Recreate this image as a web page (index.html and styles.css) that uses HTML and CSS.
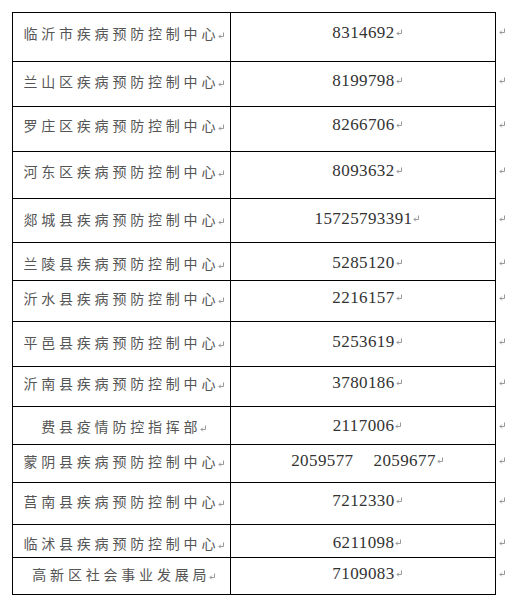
FILE: index.html
```html
<!DOCTYPE html>
<html lang="zh">
<head>
<meta charset="utf-8">
<title>疾病预防控制中心联系电话</title>
<link rel="stylesheet" href="styles.css">
</head>
<body>
<div class="page">
  <div class="tbl">
    <div class="row"><div class="cell name">临沂市疾病预防控制中心<svg class="pm" viewBox="0 0 6 7" width="6" height="7"><path d="M5.5 0.5V4.5H1M2.8 2.7L1 4.5L2.8 6.3"/></svg></div><div class="cell num">8314692<svg class="pm" viewBox="0 0 6 7" width="6" height="7"><path d="M5.5 0.5V4.5H1M2.8 2.7L1 4.5L2.8 6.3"/></svg></div><div class="end"><svg class="pm" viewBox="0 0 6 7" width="6" height="7"><path d="M5.5 0.5V4.5H1M2.8 2.7L1 4.5L2.8 6.3"/></svg></div></div>
    <div class="row"><div class="cell name">兰山区疾病预防控制中心<svg class="pm" viewBox="0 0 6 7" width="6" height="7"><path d="M5.5 0.5V4.5H1M2.8 2.7L1 4.5L2.8 6.3"/></svg></div><div class="cell num">8199798<svg class="pm" viewBox="0 0 6 7" width="6" height="7"><path d="M5.5 0.5V4.5H1M2.8 2.7L1 4.5L2.8 6.3"/></svg></div><div class="end"><svg class="pm" viewBox="0 0 6 7" width="6" height="7"><path d="M5.5 0.5V4.5H1M2.8 2.7L1 4.5L2.8 6.3"/></svg></div></div>
    <div class="row"><div class="cell name">罗庄区疾病预防控制中心<svg class="pm" viewBox="0 0 6 7" width="6" height="7"><path d="M5.5 0.5V4.5H1M2.8 2.7L1 4.5L2.8 6.3"/></svg></div><div class="cell num">8266706<svg class="pm" viewBox="0 0 6 7" width="6" height="7"><path d="M5.5 0.5V4.5H1M2.8 2.7L1 4.5L2.8 6.3"/></svg></div><div class="end"><svg class="pm" viewBox="0 0 6 7" width="6" height="7"><path d="M5.5 0.5V4.5H1M2.8 2.7L1 4.5L2.8 6.3"/></svg></div></div>
    <div class="row"><div class="cell name">河东区疾病预防控制中心<svg class="pm" viewBox="0 0 6 7" width="6" height="7"><path d="M5.5 0.5V4.5H1M2.8 2.7L1 4.5L2.8 6.3"/></svg></div><div class="cell num">8093632<svg class="pm" viewBox="0 0 6 7" width="6" height="7"><path d="M5.5 0.5V4.5H1M2.8 2.7L1 4.5L2.8 6.3"/></svg></div><div class="end"><svg class="pm" viewBox="0 0 6 7" width="6" height="7"><path d="M5.5 0.5V4.5H1M2.8 2.7L1 4.5L2.8 6.3"/></svg></div></div>
    <div class="row"><div class="cell name">郯城县疾病预防控制中心<svg class="pm" viewBox="0 0 6 7" width="6" height="7"><path d="M5.5 0.5V4.5H1M2.8 2.7L1 4.5L2.8 6.3"/></svg></div><div class="cell num">15725793391<svg class="pm" viewBox="0 0 6 7" width="6" height="7"><path d="M5.5 0.5V4.5H1M2.8 2.7L1 4.5L2.8 6.3"/></svg></div><div class="end"><svg class="pm" viewBox="0 0 6 7" width="6" height="7"><path d="M5.5 0.5V4.5H1M2.8 2.7L1 4.5L2.8 6.3"/></svg></div></div>
    <div class="row"><div class="cell name">兰陵县疾病预防控制中心<svg class="pm" viewBox="0 0 6 7" width="6" height="7"><path d="M5.5 0.5V4.5H1M2.8 2.7L1 4.5L2.8 6.3"/></svg></div><div class="cell num">5285120<svg class="pm" viewBox="0 0 6 7" width="6" height="7"><path d="M5.5 0.5V4.5H1M2.8 2.7L1 4.5L2.8 6.3"/></svg></div><div class="end"><svg class="pm" viewBox="0 0 6 7" width="6" height="7"><path d="M5.5 0.5V4.5H1M2.8 2.7L1 4.5L2.8 6.3"/></svg></div></div>
    <div class="row"><div class="cell name">沂水县疾病预防控制中心<svg class="pm" viewBox="0 0 6 7" width="6" height="7"><path d="M5.5 0.5V4.5H1M2.8 2.7L1 4.5L2.8 6.3"/></svg></div><div class="cell num">2216157<svg class="pm" viewBox="0 0 6 7" width="6" height="7"><path d="M5.5 0.5V4.5H1M2.8 2.7L1 4.5L2.8 6.3"/></svg></div><div class="end"><svg class="pm" viewBox="0 0 6 7" width="6" height="7"><path d="M5.5 0.5V4.5H1M2.8 2.7L1 4.5L2.8 6.3"/></svg></div></div>
    <div class="row"><div class="cell name">平邑县疾病预防控制中心<svg class="pm" viewBox="0 0 6 7" width="6" height="7"><path d="M5.5 0.5V4.5H1M2.8 2.7L1 4.5L2.8 6.3"/></svg></div><div class="cell num">5253619<svg class="pm" viewBox="0 0 6 7" width="6" height="7"><path d="M5.5 0.5V4.5H1M2.8 2.7L1 4.5L2.8 6.3"/></svg></div><div class="end"><svg class="pm" viewBox="0 0 6 7" width="6" height="7"><path d="M5.5 0.5V4.5H1M2.8 2.7L1 4.5L2.8 6.3"/></svg></div></div>
    <div class="row"><div class="cell name">沂南县疾病预防控制中心<svg class="pm" viewBox="0 0 6 7" width="6" height="7"><path d="M5.5 0.5V4.5H1M2.8 2.7L1 4.5L2.8 6.3"/></svg></div><div class="cell num">3780186<svg class="pm" viewBox="0 0 6 7" width="6" height="7"><path d="M5.5 0.5V4.5H1M2.8 2.7L1 4.5L2.8 6.3"/></svg></div><div class="end"><svg class="pm" viewBox="0 0 6 7" width="6" height="7"><path d="M5.5 0.5V4.5H1M2.8 2.7L1 4.5L2.8 6.3"/></svg></div></div>
    <div class="row"><div class="cell name">费县疫情防控指挥部<svg class="pm" viewBox="0 0 6 7" width="6" height="7"><path d="M5.5 0.5V4.5H1M2.8 2.7L1 4.5L2.8 6.3"/></svg></div><div class="cell num">2117006<svg class="pm" viewBox="0 0 6 7" width="6" height="7"><path d="M5.5 0.5V4.5H1M2.8 2.7L1 4.5L2.8 6.3"/></svg></div><div class="end"><svg class="pm" viewBox="0 0 6 7" width="6" height="7"><path d="M5.5 0.5V4.5H1M2.8 2.7L1 4.5L2.8 6.3"/></svg></div></div>
    <div class="row"><div class="cell name">蒙阴县疾病预防控制中心<svg class="pm" viewBox="0 0 6 7" width="6" height="7"><path d="M5.5 0.5V4.5H1M2.8 2.7L1 4.5L2.8 6.3"/></svg></div><div class="cell num">2059577<span class="gap"></span>2059677<svg class="pm" viewBox="0 0 6 7" width="6" height="7"><path d="M5.5 0.5V4.5H1M2.8 2.7L1 4.5L2.8 6.3"/></svg></div><div class="end"><svg class="pm" viewBox="0 0 6 7" width="6" height="7"><path d="M5.5 0.5V4.5H1M2.8 2.7L1 4.5L2.8 6.3"/></svg></div></div>
    <div class="row"><div class="cell name">莒南县疾病预防控制中心<svg class="pm" viewBox="0 0 6 7" width="6" height="7"><path d="M5.5 0.5V4.5H1M2.8 2.7L1 4.5L2.8 6.3"/></svg></div><div class="cell num">7212330<svg class="pm" viewBox="0 0 6 7" width="6" height="7"><path d="M5.5 0.5V4.5H1M2.8 2.7L1 4.5L2.8 6.3"/></svg></div><div class="end"><svg class="pm" viewBox="0 0 6 7" width="6" height="7"><path d="M5.5 0.5V4.5H1M2.8 2.7L1 4.5L2.8 6.3"/></svg></div></div>
    <div class="row"><div class="cell name">临沭县疾病预防控制中心<svg class="pm" viewBox="0 0 6 7" width="6" height="7"><path d="M5.5 0.5V4.5H1M2.8 2.7L1 4.5L2.8 6.3"/></svg></div><div class="cell num">6211098<svg class="pm" viewBox="0 0 6 7" width="6" height="7"><path d="M5.5 0.5V4.5H1M2.8 2.7L1 4.5L2.8 6.3"/></svg></div><div class="end"><svg class="pm" viewBox="0 0 6 7" width="6" height="7"><path d="M5.5 0.5V4.5H1M2.8 2.7L1 4.5L2.8 6.3"/></svg></div></div>
    <div class="row"><div class="cell name">高新区社会事业发展局<svg class="pm" viewBox="0 0 6 7" width="6" height="7"><path d="M5.5 0.5V4.5H1M2.8 2.7L1 4.5L2.8 6.3"/></svg></div><div class="cell num">7109083<svg class="pm" viewBox="0 0 6 7" width="6" height="7"><path d="M5.5 0.5V4.5H1M2.8 2.7L1 4.5L2.8 6.3"/></svg></div><div class="end"><svg class="pm" viewBox="0 0 6 7" width="6" height="7"><path d="M5.5 0.5V4.5H1M2.8 2.7L1 4.5L2.8 6.3"/></svg></div></div>
  </div>
</div>
</body>
</html>
```
FILE: styles.css
```css
* { box-sizing: border-box; }
html, body { margin: 0; padding: 0; background: #fff; }
.page { padding: 12px 0 0 12px; }
.tbl { display: flex; flex-direction: column; }
.row { display: flex; height: 45px; --pt: 9px; }
.cell {
  border-right: 1px solid #000;
  border-bottom: 1px solid #000;
  padding-top: var(--pt);
  line-height: 20px;
  white-space: nowrap;
  text-align: center;
}
.name {
  width: 219px;
  border-left: 1px solid #000;
  padding-left: 4px;
  font-family: "Noto Sans CJK SC", sans-serif;
  font-size: 14px;
  letter-spacing: 3.8px;
  color: #555;
}
.num {
  width: 265px;
  padding-left: 8px;
  font-family: "Liberation Serif", serif;
  font-size: 17px;
  letter-spacing: 0.4px;
  color: #333;
}
.end {
  padding-top: var(--pt);
  padding-left: 2px;
  line-height: 20px;
  font-family: "Liberation Serif", serif;
  font-size: 17px;
}
.row:first-child .cell { border-top: 1px solid #000; }
.pm { display: inline-block; vertical-align: 2px; margin-left: 1px; }
.pm path { fill: none; stroke: #999; stroke-width: 1; }
.name .pm { vertical-align: 0; margin-left: -1.6px; }
.gap { display: inline-block; width: 20px; }

.row:nth-child(1) { height: 50px; --pt: 10px; }
.row:nth-child(2) { height: 45px; --pt: 9px; }
.row:nth-child(3) { height: 45px; --pt: 8px; }
.row:nth-child(4) { height: 47px; --pt: 9px; }
.row:nth-child(5) { height: 44px; --pt: 10px; }
.row:nth-child(6) { height: 38px; --pt: 10px; }
.row:nth-child(7) { height: 41px; --pt: 7px; }
.row:nth-child(8) { height: 45px; --pt: 10px; }
.row:nth-child(9) { height: 40px; --pt: 6px; }
.row:nth-child(10) { height: 38px; --pt: 9px; }
.row:nth-child(11) { height: 38px; --pt: 6px; }
.row:nth-child(12) { height: 42px; --pt: 8px; }
.row:nth-child(13) { height: 33px; --pt: 8px; }
.row:nth-child(14) { height: 37px; --pt: 6px; }
```
